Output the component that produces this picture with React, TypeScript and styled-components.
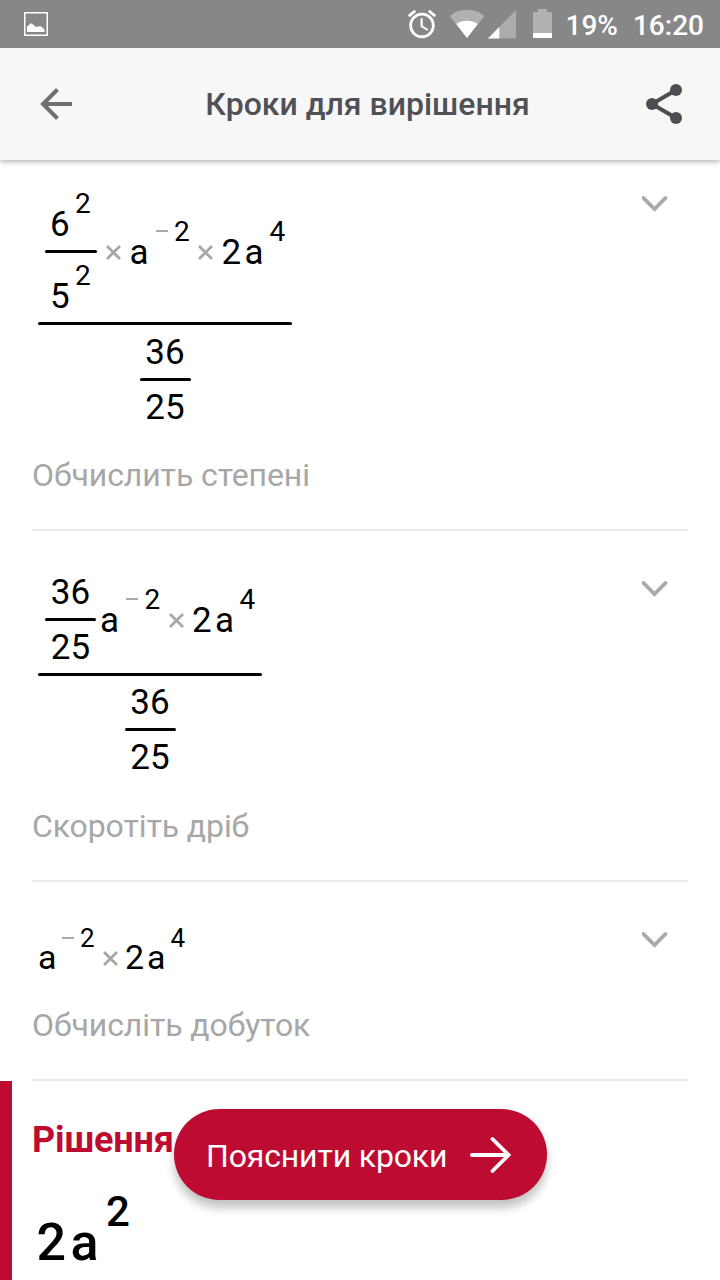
import React from "react";
import styled, { createGlobalStyle } from "styled-components";

const GlobalStyle = createGlobalStyle`
  * { box-sizing: border-box; }
  body {
    margin: 0;
    background: #fff;
    font-family: Roboto, "Noto Sans", sans-serif;
    color: #000;
  }
  svg { display: block; flex: none; }
`;

const RED = "#be0b31";

const Screen = styled.div`
  width: 720px;
  height: 1280px;
  overflow: hidden;
  display: flex;
  flex-direction: column;
  background: #fff;
  position: relative;
`;

const StatusBar = styled.div`
  flex: none;
  height: 48px;
  background: #878787;
  padding: 0 16px 0 24px;
  display: flex;
  align-items: center;
  position: relative;
  z-index: 3;
`;

const StatusIcons = styled.div`
  margin-left: auto;
  display: flex;
  align-items: center;
`;

const StatusText = styled.span<{ $gap: number }>`
  margin-left: ${(p) => p.$gap}px;
  color: #fff;
  font-size: 28px;
  font-weight: 500;
  line-height: 32px;
  padding-top: 3px;
  white-space: nowrap;
`;

const Header = styled.header`
  flex: none;
  height: 112px;
  padding: 0 38px;
  background: #f7f7f7;
  box-shadow: 0 1px 6px rgba(0, 0, 0, 0.38);
  display: flex;
  align-items: center;
  position: relative;
  z-index: 2;
`;

const Title = styled.h1`
  flex: 1;
  margin: 0;
  padding-left: 17px;
  font-size: 32px;
  font-weight: 500;
  line-height: 40px;
  text-align: center;
  color: #505156;
  white-space: nowrap;
`;

const Steps = styled.main`
  margin-top: -14px;
`;

const Step = styled.section`
  margin: 0 32px;
  padding: 44px 20px 34px 0;
  border-bottom: 2px solid #e9e9e9;
  display: flex;
  justify-content: space-between;
  align-items: flex-start;
`;

const Chevron = styled.svg`
  margin-top: 5.5px;
`;

const Expression = styled.div<{ $height: number }>`
  height: ${(p) => p.$height}px;
  padding-left: 6px;
  display: flex;
  flex-direction: column;
  align-items: flex-start;
`;

const Label = styled.p`
  margin: 0;
  font-size: 32px;
  line-height: 40px;
  letter-spacing: -0.1px;
  color: #a7a7a7;
  white-space: nowrap;
`;

const Fraction = styled.div<{ $width: number }>`
  flex: none;
  width: ${(p) => p.$width}px;
  display: flex;
  flex-direction: column;
  align-items: center;
`;

const Part = styled.div<{ $height?: number; $pad?: number; $left?: number }>`
  width: 100%;
  ${(p) => (p.$height ? `height: ${p.$height}px;` : "")}
  padding-top: ${(p) => p.$pad ?? 0}px;
  padding-left: ${(p) => p.$left ?? 0}px;
  display: flex;
  align-items: flex-start;
`;

const Centered = styled(Part)`
  justify-content: center;
`;

const Bar = styled.div`
  flex: none;
  width: 100%;
  height: 3px;
  border-radius: 1.5px;
  background: #000;
`;

const Term = styled.span<{ $size?: number; $width?: number; $top?: number; $weight?: number }>`
  flex: none;
  ${(p) => (p.$width ? `width: ${p.$width}px;` : "")}
  margin-top: ${(p) => p.$top ?? 0}px;
  font-size: ${(p) => p.$size ?? 35}px;
  font-weight: ${(p) => p.$weight ?? 400};
  line-height: 1;
  white-space: nowrap;
`;

const OperatorBox = styled.svg<{ $top: number; $after: number }>`
  margin-top: ${(p) => p.$top}px;
  margin-right: ${(p) => p.$after}px;
`;

const Solution = styled.section`
  flex: 1;
  border-left: 12px solid ${RED};
  padding: 39px 0 0 20px;
`;

const SolutionTitle = styled.h2`
  margin: 0;
  font-size: 36px;
  font-weight: 700;
  line-height: 40px;
  letter-spacing: -0.15px;
  color: ${RED};
  white-space: nowrap;
`;

const ExplainButton = styled.button`
  position: absolute;
  left: 174px;
  top: 1109px;
  width: 373px;
  height: 91px;
  padding: 0 36px 0 32px;
  border: 0;
  border-radius: 46px;
  background: ${RED};
  box-shadow: 0 8px 10px rgba(0, 0, 0, 0.24);
  color: #fff;
  font: 400 32px/40px Roboto, "Noto Sans", sans-serif;
  letter-spacing: -0.15px;
  display: flex;
  align-items: center;
  justify-content: space-between;
  white-space: nowrap;
`;

const ButtonText = styled.span`
  padding-top: 2px;
`;

const Times = ({ top, after }: { top: number; after: number }) => (
  <OperatorBox $top={top} $after={after} width="15" height="15" viewBox="0 0 15 15">
    <path d="M1 1 14 14M14 1 1 14" stroke="#a6a6a6" strokeWidth="2.8" />
  </OperatorBox>
);

const Minus = ({ top, after }: { top: number; after: number }) => (
  <OperatorBox $top={top} $after={after} width="12" height="2" viewBox="0 0 12 2">
    <path d="M0 1H12" stroke="#a9a9a9" strokeWidth="2" />
  </OperatorBox>
);

const ThirtySixOver25 = ({ topHeight = 53, pad = 9 }: { topHeight?: number; pad?: number }) => (
  <Fraction $width={51}>
    <Centered $height={topHeight} $pad={pad}><Term>36</Term></Centered>
    <Bar />
    <Centered $pad={9}><Term>25</Term></Centered>
  </Fraction>
);

const Expand = () => (
  <Chevron width="26" height="16" viewBox="0 0 26 16">
    <path d="M1.5 2 12.5 13 23.5 2" fill="none" stroke="#a9a9a9" strokeWidth="3.8" strokeLinecap="round" />
  </Chevron>
);

const PowersStep = () => (
  <Step>
    <div>
      <Expression $height={265}>
        <Fraction $width={254}>
          <Part $height={132} $left={7}>
            <Fraction $width={52}>
              <Part $height={60} $left={5}>
                <Term $top={17} $width={25}>6</Term>
                <Term $size={28}>2</Term>
              </Part>
              <Bar />
              <Part $left={5}>
                <Term $top={26} $width={25}>5</Term>
                <Term $top={9} $size={28}>2</Term>
              </Part>
            </Fraction>
            <Term $width={9} />
            <Times top={55} after={8.5} />
            <Term $top={45} $width={26}>a</Term>
            <Minus top={40} after={6.5} />
            <Term $top={28} $size={28} $width={24}>2</Term>
            <Times top={55} after={8.5} />
            <Term $top={45} $width={23}>2</Term>
            <Term $top={45} $width={25}>a</Term>
            <Term $top={28} $size={28}>4</Term>
          </Part>
          <Bar />
          <ThirtySixOver25 pad={10} />
        </Fraction>
      </Expression>
      <Label>Обчислить степені</Label>
    </div>
    <Expand />
  </Step>
);

const ReduceStep = () => (
  <Step>
    <div>
      <Expression $height={231}>
        <Fraction $width={224}>
          <Part $height={98} $left={7}>
            <ThirtySixOver25 topHeight={43} pad={0} />
            <Term $width={4} />
            <Term $top={28} $width={25.5}>a</Term>
            <Minus top={23} after={7} />
            <Term $top={11} $size={28} $width={24}>2</Term>
            <Times top={38} after={8.5} />
            <Term $top={28} $width={23}>2</Term>
            <Term $top={28} $width={24.5}>a</Term>
            <Term $top={11} $size={28}>4</Term>
          </Part>
          <Bar />
          <ThirtySixOver25 topHeight={52} pad={9} />
        </Fraction>
      </Expression>
      <Label>Скоротіть дріб</Label>
    </div>
    <Expand />
  </Step>
);

const ProductStep = () => (
  <Step>
    <div>
      <Expression $height={79}>
        <Part>
          <Term $size={34} $top={14} $width={23.5}>a</Term>
          <Minus top={11} after={6.5} />
          <Term $size={26} $top={-1} $width={22.5}>2</Term>
          <Times top={25} after={7.5} />
          <Term $size={34} $top={14} $width={22}>2</Term>
          <Term $size={34} $top={14} $width={23.5}>a</Term>
          <Term $size={26} $top={-1}>4</Term>
        </Part>
      </Expression>
      <Label>Обчисліть добуток</Label>
    </div>
    <Expand />
  </Step>
);

export default function App() {
  return (
    <>
      <GlobalStyle />
      <Screen>
        <StatusBar>
          <svg width="24" height="24" viewBox="0 0 24 24">
            <rect x=".75" y=".75" width="22.5" height="22.5" fill="none" stroke="#fff" strokeWidth="1.5" />
            <path d="M3 20V14.5L6.5 11.5H8L12 15L15 14.2H17L20.5 17.5V20Z" fill="#fff" />
          </svg>
          <StatusIcons>
            <svg width="34" height="34" viewBox="0 0 24 24" fill="#fff">
              <path d="M22 5.72l-4.6-3.86-1.29 1.53 4.6 3.86L22 5.72zM7.88 3.39L6.6 1.86 2 5.71l1.29 1.53 4.59-3.85zM12.5 8H11v6l4.75 2.85.75-1.23-4-2.37V8zM12 4c-4.97 0-9 4.03-9 9s4.02 9 9 9c4.97 0 9-4.03 9-9s-4.03-9-9-9zm0 16c-3.87 0-7-3.13-7-7s3.13-7 7-7 7 3.13 7 7-3.13 7-7 7z" />
            </svg>
            <svg width="114" height="30" viewBox="439 9 114 30">
              <path d="M449.7 16C459.5 7.8 474.5 7.8 484.4 16L467 38Z" fill="#b1b1b1" />
              <path d="M456.3 24C462.5 19.6 471.5 19.6 477.8 24L467 38Z" fill="#fff" />
              <path d="M488 38.5 516 10V38.5Z" fill="#acacac" />
              <path d="M488 38.5 499.3 27V38.5Z" fill="#fff" />
              <path d="M533 12H538V9H547V12H552V33H533Z" fill="#b1b1b1" />
              <path d="M533 33H552V38H533Z" fill="#fff" />
            </svg>
            <StatusText $gap={13}>19%</StatusText>
            <StatusText $gap={15}>16:20</StatusText>
          </StatusIcons>
        </StatusBar>
        <Header>
          <svg width="36" height="36" viewBox="0 0 36 36">
            <path d="M34 18H5M19.5 3.5 5 18 19.5 32.5" fill="none" stroke="#707070" strokeWidth="4" />
          </svg>
          <Title>Кроки для вирішення</Title>
          <svg width="38" height="40" viewBox="0 0 38 40">
            <path d="M32 6 8 20 32 34" fill="none" stroke="#4d4e52" strokeWidth="4" />
            <g fill="#4d4e52">
              <circle cx="32" cy="6" r="6" />
              <circle cx="8" cy="20" r="6" />
              <circle cx="32" cy="34" r="6" />
            </g>
          </svg>
        </Header>
        <Steps>
          <PowersStep />
          <ReduceStep />
          <ProductStep />
        </Steps>
        <Solution>
          <SolutionTitle>Рішення</SolutionTitle>
          <Part $pad={31} $left={4.5}>
            <Term $size={52} $weight={500} $top={26} $width={34}>2</Term>
            <Term $size={52} $weight={500} $top={26} $width={35.5}>a</Term>
            <Term $size={42} $weight={500}>2</Term>
          </Part>
        </Solution>
        <ExplainButton>
          <ButtonText>Пояснити кроки</ButtonText>
          <svg width="41" height="38" viewBox="0 0 41 38">
            <path d="M2 19H38M22.5 3 38.5 19 22.5 35" fill="none" stroke="#fff" strokeWidth="3.8" strokeLinecap="round" />
          </svg>
        </ExplainButton>
      </Screen>
    </>
  );
}
